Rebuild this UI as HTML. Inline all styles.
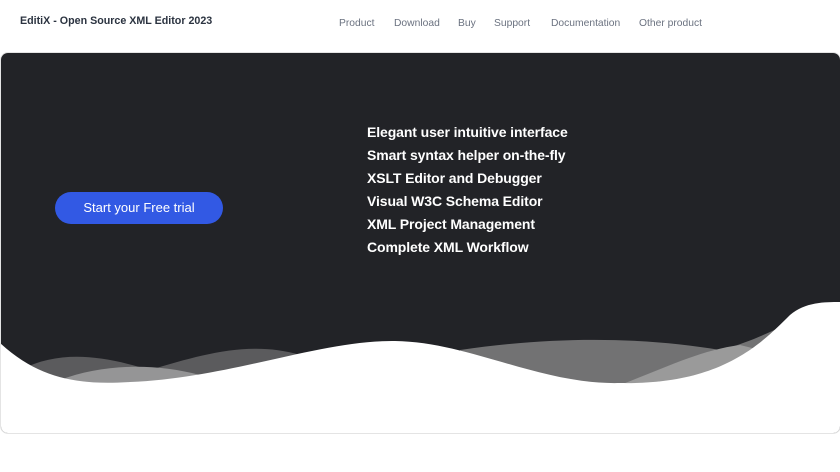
<!DOCTYPE html><html><head><style>
body{margin:0;width:840px;height:472px;background:#fff;font-family:"Liberation Sans",sans-serif;position:relative;overflow:hidden}
.t{position:absolute;left:20px;top:15px;font-size:10.7px;font-weight:bold;color:#2b3340}
.nav{position:absolute;top:18px;font-size:10.3px;color:#6b7280}
.hero{position:absolute;left:0;top:52px;width:839px;height:380px;border:1px solid #e4e4e4;border-radius:8px;overflow:hidden;background:#fff}
.btn{position:absolute;left:54px;top:139px;width:168px;height:32px;border-radius:16px;background:#3259e4;color:#fff;font-size:13px;text-align:center;line-height:32px}
.f{position:absolute;left:366px;color:#fff;font-size:14px;font-weight:bold;letter-spacing:-0.1px}
</style></head><body>
<div class="t">EditiX - Open Source XML Editor 2023</div>
<div class="nav" style="left:339px">Product</div>
<div class="nav" style="left:394px">Download</div>
<div class="nav" style="left:458px">Buy</div>
<div class="nav" style="left:494px">Support</div>
<div class="nav" style="left:551px">Documentation</div>
<div class="nav" style="left:639px">Other product</div>
<div class="hero">
<svg width="840" height="381" viewBox="0 52 840 381" style="position:absolute;left:-1px;top:-1px">
<rect x="0" y="52" width="840" height="381" fill="#222327"/>
<path d="M20 370 C60 350 100 355 150 370 C200 355 250 340 300 355 L300 400 L20 400Z" fill="#5b5b5d"/>
<path d="M60 380 C100 365 150 362 200 375 C240 380 270 385 290 390 L60 400Z" fill="#959596"/>
<path d="M460 350 C560 335 650 338 720 350 C760 340 780 325 800 320 L800 400 L460 400Z" fill="#727273"/>
<path d="M620 385 C660 370 700 350 740 345 C760 350 780 355 800 360 L800 400 L620 400Z" fill="#9a9a9a"/>
<path d="M0 343 C40 380 80 385 130 382 C230 378 320 340 395 341 C470 342 540 385 620 383 C720 385 760 345 790 315 C805 302 825 302 840 302 L840 433 L0 433Z" fill="#fff"/>
</svg>
<div class="btn">Start your Free trial</div>
<div class="f" style="top:71px">Elegant user intuitive interface</div>
<div class="f" style="top:94px">Smart syntax helper on-the-fly</div>
<div class="f" style="top:117px">XSLT Editor and Debugger</div>
<div class="f" style="top:140px">Visual W3C Schema Editor</div>
<div class="f" style="top:163px">XML Project Management</div>
<div class="f" style="top:186px">Complete XML Workflow</div>
</div>
</body></html>
